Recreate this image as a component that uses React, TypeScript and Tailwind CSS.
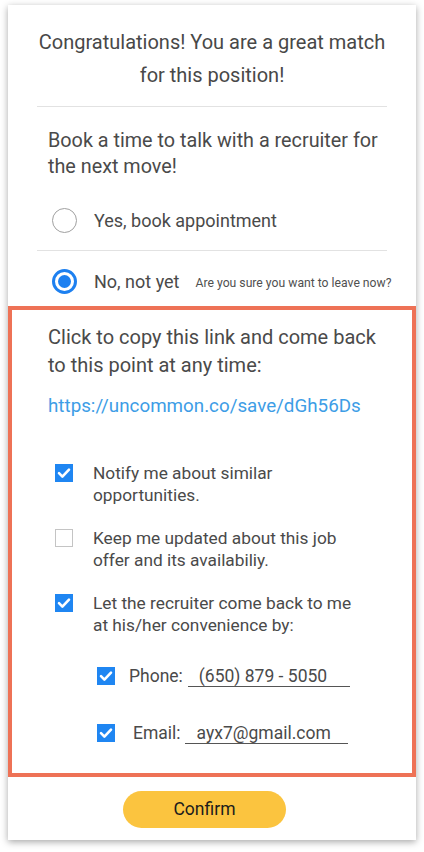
const font = { fontFamily: 'Roboto, "Noto Sans", Arial, sans-serif' };

function Check({ on }: { on: boolean }) {
  if (!on) return <span className="block w-[18px] h-[18px] shrink-0 border border-[#c4c4c4] bg-white" />;
  return (
    <svg width="18" height="18" viewBox="0 0 18 18" className="block shrink-0">
      <rect width="18" height="18" fill="#1f86f2" />
      <path d="M4 9.2 L7.4 12.6 L14 5.6" fill="none" stroke="#fff" strokeWidth="2.6" strokeLinecap="round" strokeLinejoin="round" />
    </svg>
  );
}

export default function App() {
  return (
    <div className="min-h-screen bg-white pt-[5px] text-[#4a4a4a]" style={font}>
      <div className="mx-[8px] w-[408px] bg-white shadow-[0_2px_7px_rgba(0,0,0,0.35)]">
        <div className="px-[29px]">
          <h1 className="pt-[21px] pb-[14px] text-center text-[20px] leading-[33px] text-[#484848] border-b border-[#e2e2e2]">
            Congratulations! You are a great match for this position!
          </h1>
          <p className="pt-[21px] pl-[11px] pr-[6px] text-[19.8px] leading-[26px]">
            Book a time to talk with a recruiter for the next move!
          </p>
          <div className="mt-[11px] h-[60px] flex items-center border-b border-[#e2e2e2] pl-[15px]">
            <span className="w-[25px] h-[25px] rounded-full border border-[#a0a0a0] bg-white" />
            <span className="ml-[17px] text-[18px]">Yes, book appointment</span>
          </div>
          <div className="h-[55px] pt-[5px] flex items-center pl-[15px] -mr-[12px] whitespace-nowrap">
            <span className="shrink-0 w-[25px] h-[25px] rounded-full border-[3px] border-[#1d80f0] flex items-center justify-center">
              <span className="w-[13px] h-[13px] rounded-full bg-[#1d80f0]" />
            </span>
            <span className="shrink-0 ml-[17px] text-[18px]">No, not yet</span>
            <span className="shrink-0 ml-[16px] mt-[4px] text-[12.2px] text-[#505050]">Are you sure you want to leave now?</span>
          </div>
        </div>

        <div className="border-4 border-[#ee7256] pl-[36px] pr-[20px] pt-[13px] pb-[25px]">
          <p className="text-[20px] leading-[28px] pr-[4px]">Click to copy this link and come back to this point at any time:</p>
          <p className="mt-[13px] text-[18.8px] leading-[28px] text-[#3d9de6]">https://uncommon.co/save/dGh56Ds</p>

          <div className="mt-[42px] flex flex-col gap-[21px] text-[17.3px] leading-[22px]">
            <div className="flex items-start pl-[7px]">
              <span className="mt-[2px]"><Check on /></span>
              <span className="ml-[20px] w-[215px]">Notify me about similar opportunities.</span>
            </div>
            <div className="flex items-start pl-[7px]">
              <span className="mt-[2px]"><Check on={false} /></span>
              <span className="ml-[20px] w-[265px]">Keep me updated about this job offer and its availabiliy.</span>
            </div>
            <div className="flex items-start pl-[7px]">
              <span className="mt-[2px]"><Check on /></span>
              <span className="ml-[20px] w-[275px]">Let the recruiter come back to me at his/her convenience by:</span>
            </div>
          </div>

          <div className="mt-[25px] h-[30px] flex items-center pl-[49px] text-[17.5px]">
            <Check on />
            <span className="ml-[14px]">Phone:</span>
            <span className="ml-[5px] w-[162px] border-b border-[#555] pl-[11px] leading-[20px]">(650) 879 - 5050</span>
          </div>
          <div className="mt-[27px] h-[30px] flex items-center pl-[49px] text-[17.5px]">
            <Check on />
            <span className="ml-[18px]">Email:</span>
            <span className="ml-[4px] w-[163px] border-b border-[#555] pl-[12px] leading-[20px]">ayx7@gmail.com</span>
          </div>
        </div>

        <div className="flex pt-[14px] pb-[12px] pl-[115px]">
          <button className="w-[163px] h-[37px] rounded-full bg-[#fbc43f] text-[17.5px] text-[#1c1c1c]">Confirm</button>
        </div>
      </div>
    </div>
  );
}
